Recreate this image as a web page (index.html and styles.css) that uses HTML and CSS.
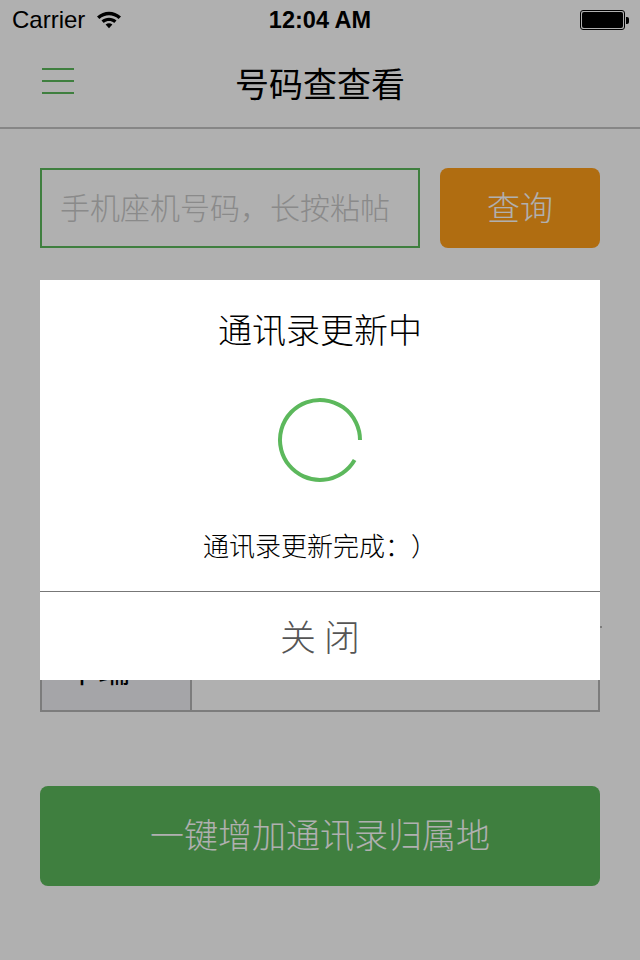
FILE: index.html
```html
<!DOCTYPE html>
<html lang="zh-CN">
<head>
    <meta charset="UTF-8">
    <meta name="viewport" content="width=device-width, initial-scale=1.0">
    <title>号码查查看</title>
    <link rel="stylesheet" href="styles.css">
</head>
<body>

<div class="status-bar">
    <div class="status-left">
        <span>Carrier</span>
        <svg class="wifi" width="26" height="20" viewBox="0 0 26 20">
            <path d="M1 7.5C8 1 18 1 25 7.5L22.6 10C17 5 9 5 3.4 10Z" fill="#000"/>
            <path d="M5.5 11.5C10 7.8 16 7.8 20.5 11.5L18.2 14C15 11.4 11 11.4 7.8 14Z" fill="#000"/>
            <path d="M9.6 15.4C11.8 13.8 14.2 13.8 16.4 15.4L13 19.2Z" fill="#000"/>
        </svg>
    </div>
    <div class="status-time">12:04 AM</div>
    <div class="status-right">
        <div class="battery"><div class="battery-fill"></div></div>
        <div class="battery-tip"></div>
    </div>
</div>

<div class="nav-bar">
    <div class="menu-icon"><span></span><span></span><span></span></div>
    <div class="nav-title">号码查查看</div>
</div>

<div class="content">
    <div class="search-row">
        <div class="search-input">手机座机号码，长按粘帖</div>
        <div class="search-btn">查询</div>
    </div>

    <div class="result-table">
        <div class="result-row">
            <div class="result-label"></div>
            <div class="result-value"></div>
        </div>
        <div class="result-row">
            <div class="result-label"></div>
            <div class="result-value"></div>
        </div>
        <div class="result-row">
            <div class="result-label"></div>
            <div class="result-value"></div>
        </div>
        <div class="result-row">
            <div class="result-label"></div>
            <div class="result-value"></div>
        </div>
        <div class="result-row">
            <div class="result-label">本端</div>
            <div class="result-value"></div>
        </div>
    </div>

    <div class="add-btn">一键增加通讯录归属地</div>
</div>

<div class="overlay"></div>

<div class="dialog">
    <div class="dialog-body">
        <div class="dialog-title">通讯录更新中</div>
        <svg class="spinner" width="88" height="88" viewBox="0 0 88 88">
            <path d="M84 44A40 40 0 1 0 78.6 64" fill="none" stroke="#5cb85c" stroke-width="4"/>
        </svg>
        <div class="dialog-msg">通讯录更新完成：）</div>
    </div>
    <div class="dialog-close">关 闭</div>
</div>

</body>
</html>
```

FILE: styles.css
```css
body {
    font-family: "Noto Sans CJK SC", "Liberation Sans", sans-serif;
    margin: 0;
    padding: 0;
    width: 640px;
    height: 960px;
    overflow: hidden;
    background-color: #ffffff;
    text-spacing-trim: space-all;
}
.status-bar {
    height: 40px;
    padding: 0 11px 0 12px;
    display: flex;
    justify-content: space-between;
    align-items: center;
    position: relative;
    font-family: "Liberation Sans", sans-serif;
    font-size: 24px;
    color: #000;
}
.status-left {
    display: flex;
    align-items: center;
    gap: 11px;
}
.wifi {
    margin-top: -3px;
}
.status-time {
    position: absolute;
    left: 0;
    right: 0;
    text-align: center;
    font-size: 23.5px;
    font-weight: bold;
}
.status-right {
    display: flex;
    align-items: center;
}
.battery {
    width: 45px;
    height: 20px;
    border: 1px solid #000;
    border-radius: 3px;
    padding: 1px;
    box-sizing: border-box;
}
.battery-fill {
    height: 100%;
    background-color: #000;
    border-radius: 2px;
}
.battery-tip {
    width: 3px;
    height: 7px;
    background-color: #000;
    margin-left: 1px;
    border-radius: 0 2px 2px 0;
}
.nav-bar {
    height: 89px;
    border-bottom: 2px solid #c2c2c2;
    box-sizing: border-box;
    display: flex;
    align-items: center;
    justify-content: center;
    position: relative;
}
.menu-icon {
    position: absolute;
    left: 42px;
    top: 28px;
    width: 32px;
    height: 26px;
    display: flex;
    flex-direction: column;
    justify-content: space-between;
}
.menu-icon span {
    height: 2px;
    background-color: #5cb85c;
}
.nav-title {
    font-size: 34px;
    color: #000;
    margin-top: -3px;
}
.content {
    padding: 39px 40px 0;
}
.search-row {
    display: flex;
    justify-content: space-between;
}
.search-input {
    width: 380px;
    height: 80px;
    border: 2px solid #5cb85c;
    box-sizing: border-box;
    padding-left: 18px;
    font-size: 30px;
    font-weight: 300;
    line-height: 73px;
    color: #c8c8c8;
    white-space: nowrap;
}
.search-btn {
    width: 160px;
    height: 80px;
    background-color: #ff9e1a;
    border-radius: 8px;
    color: #fff;
    font-size: 33px;
    font-weight: 300;
    line-height: 77px;
    text-align: center;
}
.result-table {
    margin-top: 44px;
    height: 420px;
    border: 2px solid #b4b4b4;
    box-sizing: border-box;
    display: flex;
    flex-direction: column;
}
.result-row {
    flex: 1;
    display: flex;
    border-bottom: 2px solid #b4b4b4;
}
.result-row:nth-child(4) {
    margin-right: -4px;
}
.result-row:last-child {
    border-bottom: none;
}
.result-label {
    width: 150px;
    box-sizing: border-box;
    padding-left: 24px;
    background-color: #efeff4;
    border-right: 2px solid #b4b4b4;
    font-size: 32px;
    line-height: 80px;
    color: #000;
}
.result-value {
    flex: 1;
}
.add-btn {
    margin-top: 74px;
    height: 100px;
    background-color: #5cb85c;
    border-radius: 8px;
    color: #fff;
    font-size: 34px;
    font-weight: 300;
    line-height: 96px;
    text-align: center;
}
.overlay {
    position: absolute;
    top: 0;
    left: 0;
    width: 640px;
    height: 960px;
    background-color: rgba(0, 0, 0, 0.31);
}
.dialog {
    position: absolute;
    top: 280px;
    left: 40px;
    width: 560px;
    height: 400px;
    background-color: #fff;
    display: flex;
    flex-direction: column;
}
.dialog-body {
    flex: none;
    height: 312px;
    box-sizing: border-box;
    display: flex;
    flex-direction: column;
    align-items: center;
    border-bottom: 1px solid #777;
}
.dialog-title {
    font-size: 34px;
    font-weight: 300;
    line-height: 50px;
    margin-top: 24px;
    color: #000;
}
.spinner {
    margin-top: 42px;
}
.dialog-msg {
    font-size: 26px;
    font-weight: 300;
    line-height: 40px;
    margin-top: 41px;
    color: #000;
}
.dialog-close {
    flex: none;
    height: 88px;
    text-align: center;
    font-size: 36px;
    font-weight: 300;
    line-height: 86px;
    color: #555;
}
```
